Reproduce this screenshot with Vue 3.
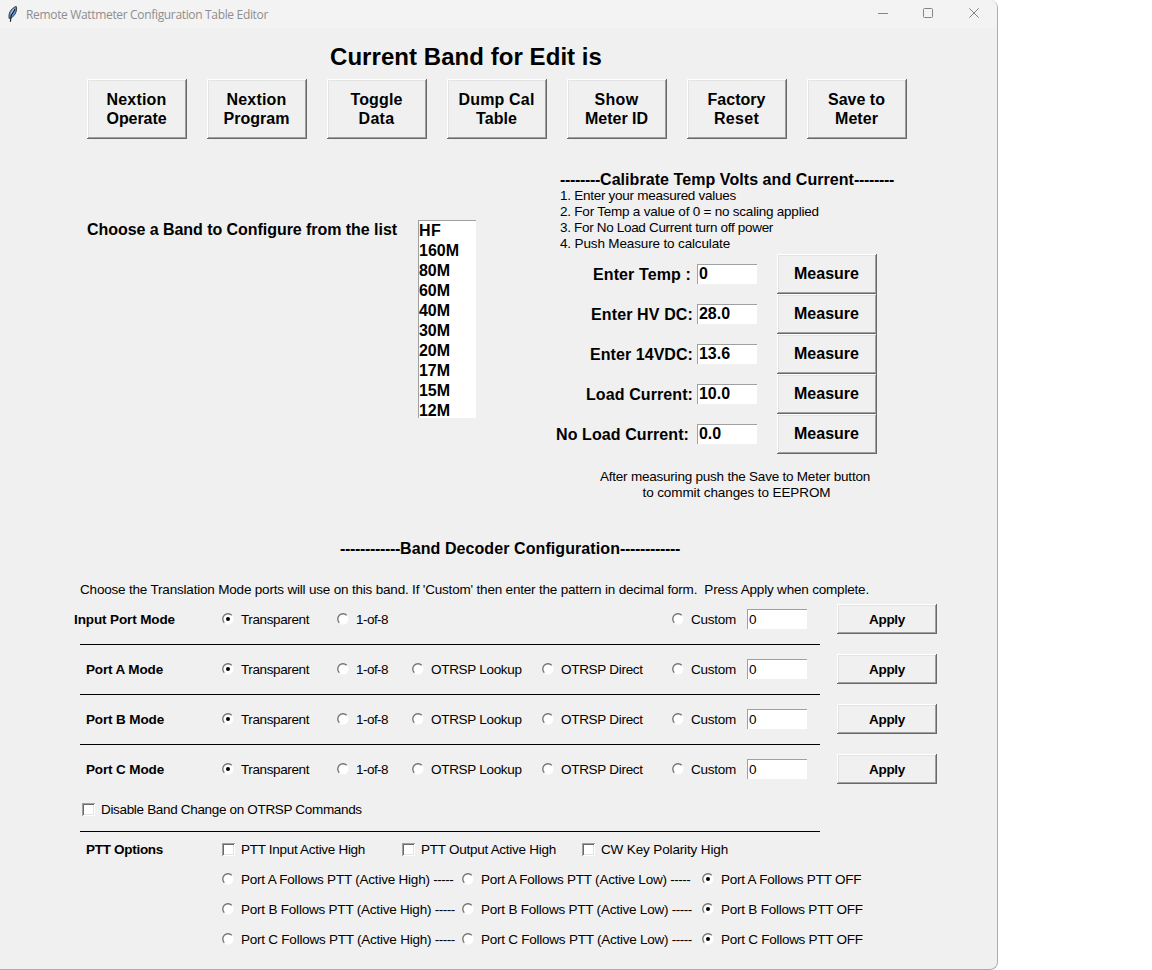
<script setup>
import { h } from 'vue'

const ctx = document.createElement('canvas').getContext('2d')
const fonts = {
  sm: '13.5px "Liberation Sans"',
  smb: 'bold 13.5px "Liberation Sans"',
  md: 'bold 16px "Liberation Sans"',
  lg: 'bold 24px "Liberation Sans"',
  cap: '12px "Open Sans"',
}

// Text run tracked so that it fills the given width.
const Run = ({ t, w, k = 'sm' }) => {
  ctx.font = fonts[k]
  const gap = (w - ctx.measureText(t).width) / t.length
  return h('span', { style: { font: fonts[k], whiteSpace: 'pre', letterSpacing: gap.toFixed(3) + 'px' } }, t)
}
Run.props = ['t', 'w', 'k']

// Radio indicator: shaded upper-left rim, light lower-right rim.
const Radio = ({ on }) =>
  h('svg', { width: 12, height: 12, viewBox: '0 0 12 12', fill: 'none' }, [
    h('circle', { cx: 6, cy: 6, r: 5.5, fill: '#fff' }),
    h('path', { d: 'M2.3 9.7A5.1 5.1 0 0 1 9.7 2.3', stroke: '#707070', 'stroke-width': 1.3 }),
    on ? h('circle', { cx: 6, cy: 6, r: 2, fill: '#000' }) : null,
  ])
Radio.props = ['on']

const actions = [
  [['Nextion', 60], ['Operate', 60]],
  [['Nextion', 60], ['Program', 66]],
  [['Toggle', 52], ['Data', 36]],
  [['Dump Cal', 76], ['Table', 41]],
  [['Show', 44], ['Meter ID', 63]],
  [['Factory', 58], ['Reset', 45]],
  [['Save to', 57], ['Meter', 43]],
]
const bands = [['HF', 22], ['160M', 40], ['80M', 31], ['60M', 31], ['40M', 31], ['30M', 31], ['20M', 31], ['17M', 31], ['15M', 31], ['12M', 31]]
const steps = [
  ['1. Enter your measured values', 176],
  ['2. For Temp a value of 0 = no scaling applied', 259],
  ['3. For No Load Current turn off power', 213],
  ['4. Push Measure to calculate', 170],
]
const readings = [
  { t: 'Enter Temp :', w: 98, end: 'e6', v: '0', vw: 9 },
  { t: 'Enter HV DC:', w: 102, end: 'e4', v: '28.0', vw: 31 },
  { t: 'Enter 14VDC:', w: 103, end: 'e4', v: '13.6', vw: 31 },
  { t: 'Load Current:', w: 107, end: 'e4', v: '10.0', vw: 31 },
  { t: 'No Load Current:', w: 133, end: 'e8', v: '0.0', vw: 22 },
]
const ports = [
  { t: 'Input Port Mode', w: 101, wide: true },
  { t: 'Port A Mode', w: 78 },
  { t: 'Port B Mode', w: 78 },
  { t: 'Port C Mode', w: 78 },
]
const modes = [
  ['Transparent', 68], ['1-of-8', 32], ['OTRSP Lookup', 91], ['OTRSP Direct', 82], ['Custom', 45],
]
const flags = [['PTT Input Active High', 125], ['PTT Output Active High', 136], ['CW Key Polarity High', 127]]
const follows = [[' (Active High) ', 194, 20], [' (Active Low) ', 191, 20], [' OFF', 142, 0]]
</script>

<template>
  <div class="window">
    <header class="titlebar">
      <svg class="feather" width="14" height="18" viewBox="0 0 14 18">
        <path d="M3.2 13.5C2.2 9 4.5 3.5 10.2 1.4C11.6 5 9 11 5.2 12.8Z" fill="#6c9bd0" stroke="#1c2836" stroke-width=".9" />
        <path d="M9.2 4L5.2 10.4L4.4 16.8" fill="none" stroke="#10151d" stroke-width="1.1" />
        <path d="M7.6 4L5 8.6" stroke="#b5d0ee" stroke-width=".9" />
      </svg>
      <Run class="caption" t="Remote Wattmeter Configuration Table Editor" :w="242" k="cap" />
      <svg class="controls" width="104" height="12" viewBox="0 0 104 12" fill="none" stroke="#858585">
        <path d="M1 6.5H11" />
        <rect x="46.5" y="1.5" width="9" height="9" rx="1" />
        <path d="M92.3 1.3L101.7 10.7M101.7 1.3L92.3 10.7" />
      </svg>
    </header>

    <h1><Run t="Current Band for Edit is" :w="272" k="lg" /></h1>

    <nav class="actions">
      <button v-for="(a, i) in actions" :key="i" class="btn tall">
        <Run v-for="l in a" :key="l[0]" :t="l[0]" :w="l[1]" k="md" />
      </button>
    </nav>

    <section class="middle">
      <div class="chooser">
        <Run class="chooser-label" t="Choose a Band to Configure from the list" :w="310" k="md" />
        <ul class="listbox">
          <li v-for="b in bands" :key="b[0]"><Run :t="b[0]" :w="b[1]" k="md" /></li>
        </ul>
      </div>
      <div class="calibrate">
        <h2><Run t="--------" :w="40" k="md" /><Run t="Calibrate Temp Volts and Current" :w="254" k="md" /><Run t="--------" :w="40" k="md" /></h2>
        <p v-for="s in steps" :key="s[0]" class="step"><Run :t="s[0]" :w="s[1]" /></p>
        <div class="readings">
          <div v-for="r in readings" :key="r.t" class="reading">
            <label :class="r.end"><Run :t="r.t" :w="r.w" k="md" /></label>
            <div class="field big"><Run :t="r.v" :w="r.vw" k="md" /></div>
            <button class="btn measure"><Run t="Measure" :w="65" k="md" /></button>
          </div>
        </div>
        <div class="note">
          <Run t="After measuring push the Save to Meter button" :w="270" />
          <Run class="second" t="to commit changes to EEPROM" :w="188" />
        </div>
      </div>
    </section>

    <h2 class="decoder"><Run t="------------" :w="60" k="md" /><Run t="Band Decoder Configuration" :w="220" k="md" /><Run t="------------" :w="60" k="md" /></h2>
    <p class="hint">
      <Run t="Choose the Translation Mode ports will use on this band. If 'Custom' then enter the pattern in decimal form.  Press Apply when complete." :w="790" />
    </p>

    <section class="ports">
      <div v-for="p in ports" :key="p.t" class="port">
        <div class="port-name" :class="{ wide: p.wide }"><Run :t="p.t" :w="p.w" k="smb" /></div>
        <div v-for="(m, i) in modes" :key="m[0]" class="choice">
          <template v-if="!p.wide || i < 2 || i > 3">
            <Radio class="radio" :on="i === 0" />
            <Run :t="m[0]" :w="m[1]" />
          </template>
        </div>
        <div class="field"><Run t="0" :w="7" /></div>
        <button class="btn apply"><Run t="Apply" :w="36" k="smb" /></button>
      </div>
    </section>

    <div class="choice disable"><i class="check"></i><Run t="Disable Band Change on OTRSP Commands" :w="261" /></div>
    <hr />

    <section class="ptt">
      <div class="ptt-name"><Run t="PTT Options" :w="77" k="smb" /></div>
      <div class="ptt-body">
        <div class="flags">
          <div v-for="f in flags" :key="f[0]" class="choice"><i class="check"></i><Run :t="f[0]" :w="f[1]" /></div>
        </div>
        <div v-for="c in 'ABC'" :key="c" class="follows">
          <div v-for="(s, i) in follows" :key="i" class="choice">
            <Radio class="radio" :on="i === 2" />
            <Run :t="'Port ' + c + ' Follows PTT' + s[0]" :w="s[1]" />
            <Run v-if="s[2]" t="-----" :w="s[2]" />
          </div>
        </div>
      </div>
    </section>
  </div>
</template>

<style>
body { background: #fff; overflow: hidden; }
</style>

<style scoped>
* { box-sizing: border-box; }
h1, h2, p, ul { margin: 0; padding: 0; }
.window {
  width: 998px; height: 970px; background: #f0f0f0; color: #000; overflow: hidden;
  border-right: 1px solid #adadad; border-bottom: 1px solid #adadad; border-radius: 0 8px 8px 0;
  font-family: "Liberation Sans", Arial, sans-serif;
}
.titlebar { height: 28px; background: #f3f3f3; display: flex; align-items: center; color: #8e8e8e; }
.feather { margin: -1px 6px 0 6px; }
.caption { margin-top: 0; }
.controls { margin: -2px 16px 0 auto; }
h1 { height: 51px; padding: 15px 0 0 330px; line-height: 0; }
h1 span { display: block; }
.actions { display: flex; gap: 20px; padding-left: 87px; }
.btn {
  width: 100px; padding: 0; margin: 0; background: #f0f0f0; color: #000; border: 0; border-radius: 0;
  box-shadow: inset -1px -1px #696969, inset 1px 1px #fff, inset -2px -2px #a0a0a0, inset 2px 2px #e3e3e3;
  display: flex; flex-direction: column; align-items: center; justify-content: center;
}
.tall { height: 60px; padding: 2px 1px 0 0; }
.tall span { height: 19px; }
.middle { display: flex; height: 391px; }
.chooser { width: 560px; padding: 81px 0 0 87px; display: flex; align-items: flex-start; }
.chooser-label { width: 331px; margin-top: 1px; }
.listbox {
  list-style: none; width: 58px; height: 198px; background: #fff; overflow: hidden;
  border-top: 1px solid #a0a0a0; border-left: 1px solid #a0a0a0;
}
.listbox li { height: 20px; display: flex; align-items: center; }
.calibrate { padding-top: 32px; }
h2 { height: 17px; display: flex; }
.step { height: 16px; line-height: 0; }
.readings { margin-top: 2px; }
.reading { height: 40px; display: flex; align-items: center; margin-left: -10px; }
.reading label { width: 147px; text-align: right; line-height: 0; padding-top: 2px; }
.reading label.e6 { padding-right: 6px; }
.reading label.e4 { padding-right: 4px; }
.reading label.e8 { padding-right: 8px; }
.field {
  width: 60px; height: 20px; background: #fff; display: flex; align-items: center; padding-left: 1px;
  border-top: 1px solid #a0a0a0; border-left: 1px solid #a0a0a0;
}
.big { margin-right: 20px; padding-bottom: 2px; }
.measure { height: 40px; padding-right: 1px; }
.note { width: 350px; margin-top: 15px; display: flex; flex-direction: column; align-items: center; }
.note span { height: 16px; }
.note .second { margin-left: 3px; }
.decoder { padding: 10px 0 0 340px; height: 52px; }
.hint { height: 13px; padding-left: 80px; line-height: 0; }
.ports { margin-left: 80px; }
.port {
  height: 50px; width: 857px; display: grid; align-items: center;
  grid-template-columns: 142px 115px 75px 130px 130px 75px 90px 100px;
  background: linear-gradient(#000, #000) 0 100% / 740px 1px no-repeat;
}
.port:last-child { background: none; }
.port > * { position: relative; top: -1px; }
.port-name { padding-left: 6px; line-height: 0; }
.port-name.wide { margin-left: -12px; }
.choice { display: flex; align-items: center; white-space: pre; }
.radio { flex: none; margin: 0 7px 1px 0; }
.apply { height: 30px; }
.check {
  flex: none; width: 13px; height: 13px; margin: 0 6px 0 0; background: #fff;
  box-shadow: inset 1px 1px #a0a0a0, inset -1px -1px #fff, inset 2px 2px #696969, inset -2px -2px #e3e3e3;
}
.disable { height: 30px; margin: -1px 0 0 82px; }
hr { margin: 7px 0 0 80px; width: 740px; height: 1px; border: 0; background: #000; }
.ptt { display: flex; padding: 2px 0 0 86px; }
.ptt-name { width: 136px; height: 30px; display: flex; align-items: center; }
.flags { display: grid; grid-template-columns: 180px 180px 180px; height: 30px; }
.follows { display: grid; grid-template-columns: 240px 240px 180px; height: 30px; }
</style>
